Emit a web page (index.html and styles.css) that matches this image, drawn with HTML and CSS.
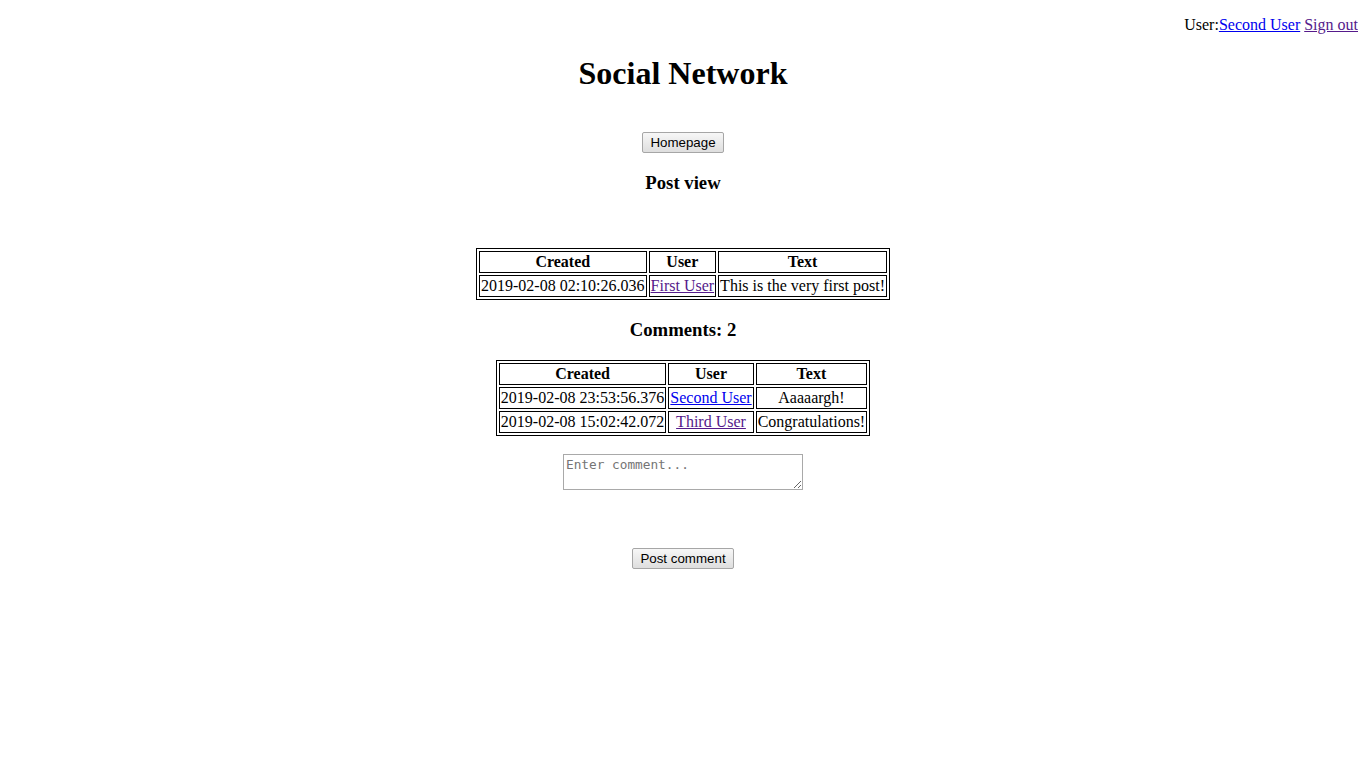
FILE: index.html
```html
<!DOCTYPE html>
<html>
<head>
<meta charset="utf-8">
<title>Social Network</title>
<link rel="stylesheet" href="styles.css">
</head>
<body>
<p class="userbar">User:<a href="#" class="link">Second User</a> <a href="#" class="visited">Sign out</a></p>
<h1 class="title">Social Network</h1>
<div class="nav"><button class="btn" type="button">Homepage</button></div>
<h3 class="heading">Post view</h3>
<table class="grid grid-post">
  <tr><th>Created</th><th>User</th><th>Text</th></tr>
  <tr><td>2019-02-08 02:10:26.036</td><td><a href="#" class="visited">First User</a></td><td>This is the very first post!</td></tr>
</table>
<h3 class="heading">Comments: 2</h3>
<table class="grid grid-comments">
  <tr><th>Created</th><th>User</th><th>Text</th></tr>
  <tr><td>2019-02-08 23:53:56.376</td><td><a href="#" class="link">Second User</a></td><td>Aaaaargh!</td></tr>
  <tr><td>2019-02-08 15:02:42.072</td><td><a href="#" class="visited">Third User</a></td><td>Congratulations!</td></tr>
</table>
<form class="comment-form">
  <textarea class="comment-input" placeholder="Enter comment..."></textarea>
  <div class="submit-row"><button class="btn" type="button">Post comment</button></div>
</form>
</body>
</html>
```
FILE: styles.css
```css
html, body {
  background: #fff;
}
body {
  margin: 8px;
  font-family: "Liberation Serif", "Times New Roman", serif;
  font-size: 16px;
  color: #000;
}
.userbar {
  margin: 8px 0 16px;
  text-align: right;
}
.link {
  color: #0000ee;
}
.visited {
  color: #551a8b;
}
.title {
  margin: 21.44px 0 0;
  font-size: 32px;
  font-weight: bold;
  text-align: center;
}
.nav {
  margin-top: 40px;
  display: flex;
  justify-content: center;
}
.btn {
  box-sizing: border-box;
  height: 21px;
  padding: 0 7px;
  font-family: "Liberation Sans", Arial, sans-serif;
  font-size: 13.33px;
  color: #000;
  background: linear-gradient(#f7f7f7, #dedede);
  border: 1px solid #a6a6a6;
  border-radius: 2px;
}
.heading {
  margin: 18.72px 0;
  font-size: 18.72px;
  font-weight: bold;
  text-align: center;
}
.grid {
  margin: 0 auto;
  border: 1px solid #000;
  border-spacing: 2px;
  border-collapse: separate;
}
.grid th, .grid td {
  border: 1px solid #000;
  padding: 1px;
  text-align: center;
  white-space: nowrap;
}
.grid-post {
  margin-top: 54px;
}
.grid-comments {
  margin-top: 19px;
}
.comment-form {
  margin: 0;
}
.comment-input {
  display: block;
  box-sizing: border-box;
  width: 240px;
  height: 36px;
  margin: 18px auto 0;
  padding: 2px;
  border: 1px solid #a9a9a9;
  font-family: "DejaVu Sans Mono", "Liberation Mono", monospace;
  font-size: 12.75px;
  resize: both;
}
.comment-input::placeholder {
  color: #757575;
}
.submit-row {
  margin-top: 58px;
  display: flex;
  justify-content: center;
}
```
